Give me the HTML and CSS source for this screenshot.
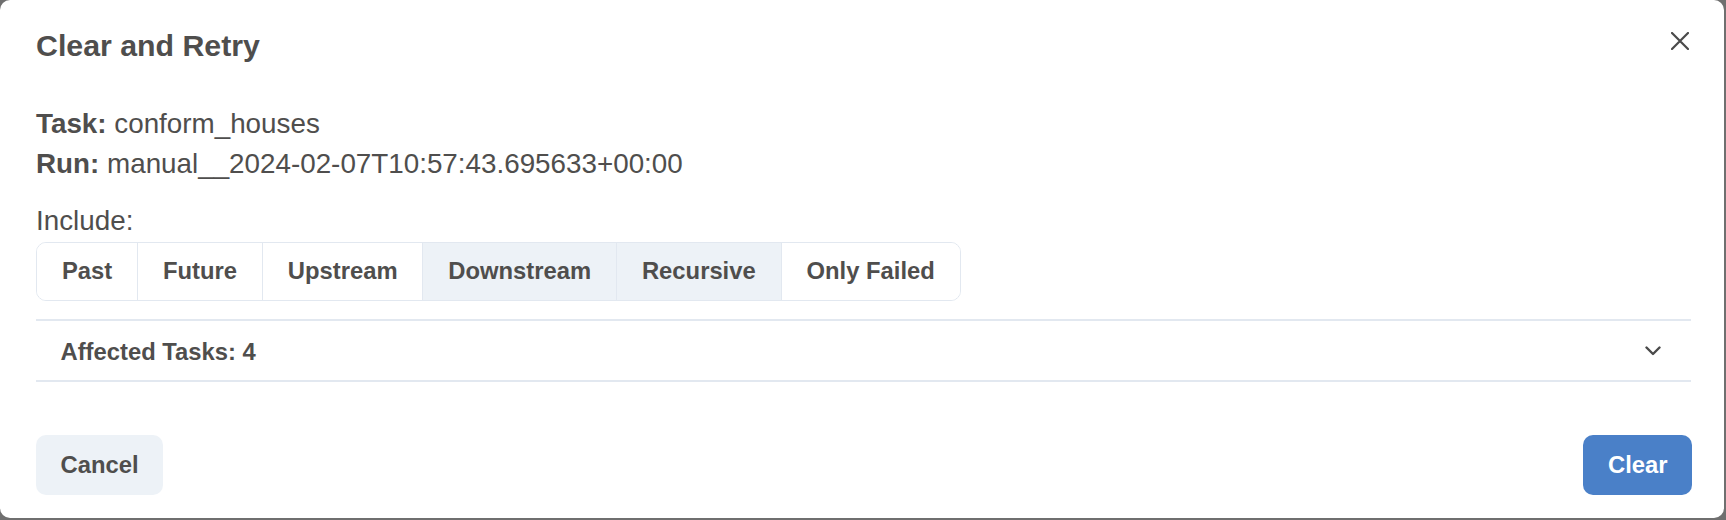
FILE: index.html
```html
<!DOCTYPE html>
<html>
<head>
<meta charset="utf-8">
<link rel="stylesheet" href="styles.css">
</head>
<body>
<div class="modal">
  <header class="modal-header">
    <h2 class="title">Clear and Retry</h2>
    <button class="close" aria-label="Close">
      <svg width="18" height="18" viewBox="0 0 18 18"><path d="M1 1L17 17M17 1L1 17" stroke="#4a4a4a" stroke-width="2.2" stroke-linecap="round" fill="none"/></svg>
    </button>
  </header>
  <section class="modal-body">
    <p class="info"><b>Task:</b> conform_houses</p>
    <p class="info"><b>Run:</b> manual__2024-02-07T10:57:43.695633+00:00</p>
    <p class="include">Include:</p>
    <div class="tabs">
      <button class="tab">Past</button>
      <button class="tab">Future</button>
      <button class="tab">Upstream</button>
      <button class="tab active">Downstream</button>
      <button class="tab active">Recursive</button>
      <button class="tab">Only Failed</button>
    </div>
    <div class="accordion">
      <div class="acc-button">
        <span>Affected Tasks: 4</span>
        <svg width="16" height="10" viewBox="0 0 16 10"><path d="M1.5 1.5L8 8L14.5 1.5" stroke="#4a4a4a" stroke-width="2.4" fill="none" stroke-linecap="round" stroke-linejoin="round"/></svg>
      </div>
    </div>
  </section>
  <footer class="modal-footer">
    <button class="btn cancel">Cancel</button>
    <button class="btn clear">Clear</button>
  </footer>
</div>
</body>
</html>
```
FILE: styles.css
```css
html, body {
  margin: 0;
  padding: 0;
  background: #6f6f6f;
}
body {
  font-family: "Liberation Sans", Arial, sans-serif;
  color: #4f4e4d;
  width: 1726px;
  height: 520px;
  overflow: hidden;
}
.modal {
  width: 1724px;
  height: 518px;
  background: #ffffff;
  border-radius: 10px;
  box-sizing: border-box;
  display: flex;
  flex-direction: column;
}
.modal-header {
  display: flex;
  justify-content: space-between;
  align-items: flex-start;
  padding: 23px 30px 0 36px;
  height: 80px;
  box-sizing: border-box;
}
.title {
  margin: 0;
  font-size: 30.3px;
  line-height: 46px;
  font-weight: 700;
}
.close {
  margin-top: 4px;
  width: 28px;
  height: 28px;
  border: none;
  background: none;
  padding: 0;
  display: flex;
  align-items: center;
  justify-content: center;
}
.modal-body {
  padding: 23.6px 33px 0 36px;
  font-size: 27.8px;
  line-height: 40.8px;
}
.info {
  margin: 0;
}
.info b {
  font-weight: 700;
}
.include {
  margin: 16px 0 0;
}
.tabs {
  display: inline-flex;
  border: 1.7px solid #e2e8f0;
  border-radius: 10px;
  overflow: hidden;
  height: 59px;
  box-sizing: border-box;
}
.tab {
  font-family: inherit;
  font-size: 23.8px;
  font-weight: 700;
  color: #4f4e4d;
  background: #ffffff;
  border: none;
  border-left: 1.7px solid #e2e8f0;
  padding: 0 24.9px;
  margin: 0;
}
.tab:first-child {
  border-left: none;
}
.tab.active {
  background: #edf2f7;
}
.accordion {
  margin-top: 18px;
  border-top: 2px solid #e2e8f0;
  border-bottom: 2px solid #e2e8f0;
}
.acc-button {
  display: flex;
  justify-content: space-between;
  align-items: center;
  height: 59.5px;
  padding: 0 30px 0 24.5px;
  font-size: 23.8px;
  font-weight: 700;
}
.acc-button span {
  padding-top: 4px;
}
.modal-footer {
  margin-top: auto;
  display: flex;
  justify-content: space-between;
  align-items: center;
  padding: 0 32px 23px 36px;
}
.btn {
  font-family: inherit;
  font-size: 23.8px;
  font-weight: 700;
  height: 60px;
  border: none;
  border-radius: 10px;
  padding: 0 24.5px;
}
.cancel {
  background: #edf2f7;
  color: #4f4e4d;
}
.clear {
  background: #4a80c8;
  color: #ffffff;
}
```
